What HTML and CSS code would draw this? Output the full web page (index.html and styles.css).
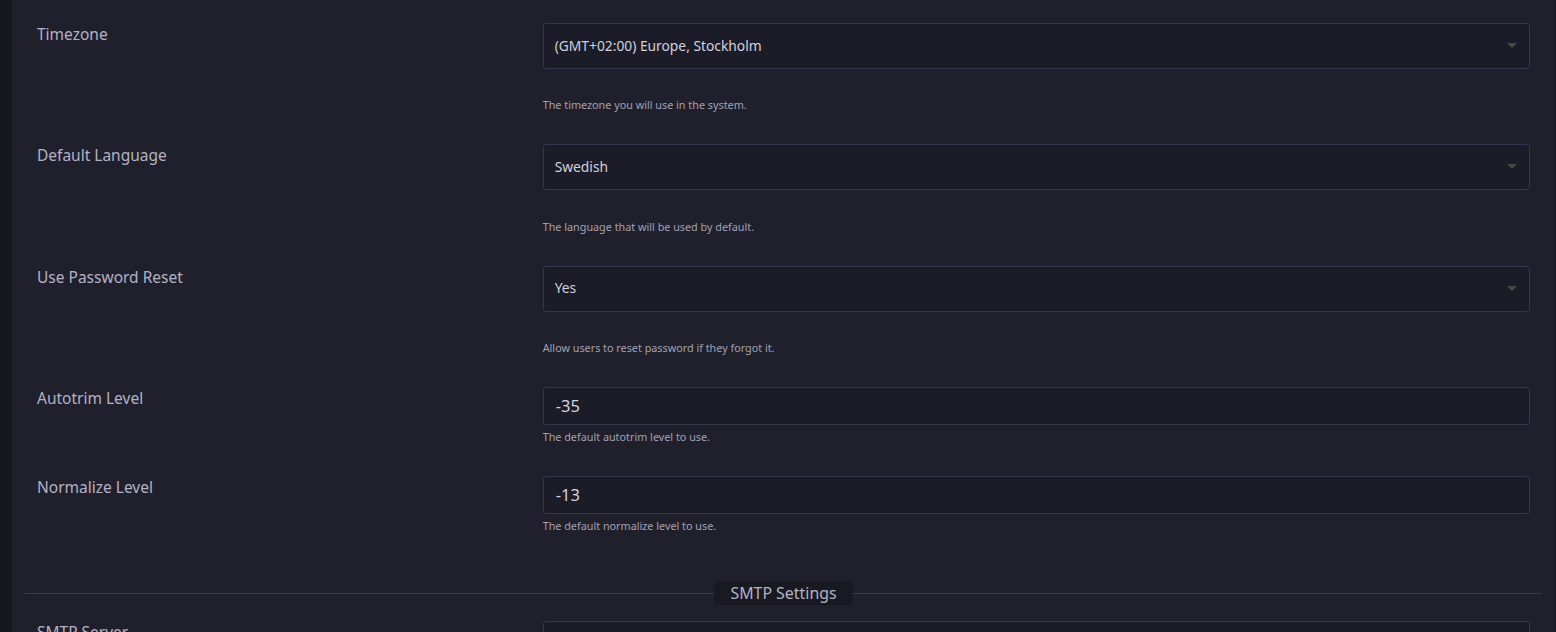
FILE: index.html
```html
<!DOCTYPE html>
<html lang="en">
<head>
<meta charset="utf-8">
<title>Settings</title>
<link rel="stylesheet" href="styles.css">
</head>
<body>
<div class="layout">
  <aside class="rail"></aside>
  <main class="content">
    <div class="row">
      <div class="label">Timezone</div>
      <div class="field">
        <div class="select"><span>(GMT+02:00) Europe, Stockholm</span><i class="caret"></i></div>
        <div class="help help-select">The timezone you will use in the system.</div>
      </div>
    </div>
    <div class="row">
      <div class="label">Default Language</div>
      <div class="field">
        <div class="select"><span>Swedish</span><i class="caret"></i></div>
        <div class="help help-select">The language that will be used by default.</div>
      </div>
    </div>
    <div class="row">
      <div class="label">Use Password Reset</div>
      <div class="field">
        <div class="select"><span>Yes</span><i class="caret"></i></div>
        <div class="help help-select">Allow users to reset password if they forgot it.</div>
      </div>
    </div>
    <div class="row">
      <div class="label">Autotrim Level</div>
      <div class="field">
        <div class="input">-35</div>
        <div class="help">The default autotrim level to use.</div>
      </div>
    </div>
    <div class="row">
      <div class="label">Normalize Level</div>
      <div class="field">
        <div class="input">-13</div>
        <div class="help">The default normalize level to use.</div>
      </div>
    </div>
    <div class="divider"><span>SMTP Settings</span></div>
    <div class="row">
      <div class="label">SMTP Server</div>
      <div class="field">
        <div class="input"></div>
      </div>
    </div>
  </main>
</div>
</body>
</html>
```

FILE: styles.css
```css
html, body {
  margin: 0;
  padding: 0;
  height: 100%;
  overflow: hidden;
}
body {
  background: #20202d;
  font-family: "Noto Sans", "Lato", sans-serif;
  color: #b2b1c3;
}
.layout {
  display: flex;
  height: 100%;
  border-right: 1px solid #18181f;
}
.rail {
  width: 12px;
  flex: none;
  background: #17171f;
}
.content {
  flex: 1;
  padding: 23px 13px 0 13px;
}
.row {
  display: grid;
  grid-template-columns: 4fr 8fr;
  margin-bottom: 32px;
}
.label {
  padding: 0 12px;
  font-size: 15.5px;
  line-height: 23px;
  color: #b3b2c4;
}
.field {
  padding: 0 12px;
}
.select, .input {
  box-sizing: border-box;
  background: #1c1b28;
  border: 1px solid #36344e;
  border-radius: 3px;
  color: #d2d1dd;
  display: flex;
  align-items: center;
  padding: 0 11px;
}
.select {
  height: 46px;
  font-size: 13.8px;
  line-height: 18px;
  padding-bottom: 1px;
  justify-content: space-between;
}
.input {
  height: 38px;
  font-size: 16.5px;
  padding-left: 12px;
}
.caret {
  width: 0;
  height: 0;
  border-left: 5px solid transparent;
  border-right: 5px solid transparent;
  border-top: 5px solid #4a4a42;
  margin-right: 1px;
}
.help {
  font-size: 10.8px;
  line-height: 14px;
  margin-top: 5px;
  color: #a2a1b2;
}
.help-select {
  margin-top: 29.33px;
}
.divider {
  position: relative;
  display: flex;
  justify-content: center;
  margin: 48px 0 16px;
}
.divider::before {
  content: "";
  position: absolute;
  left: 0;
  right: 0;
  top: 12px;
  height: 1px;
  background: #3a3948;
}
.divider span {
  position: relative;
  background: #191922;
  padding: 0 16px;
  font-size: 15.9px;
  line-height: 24px;
  color: #b3b2c4;
}
```
